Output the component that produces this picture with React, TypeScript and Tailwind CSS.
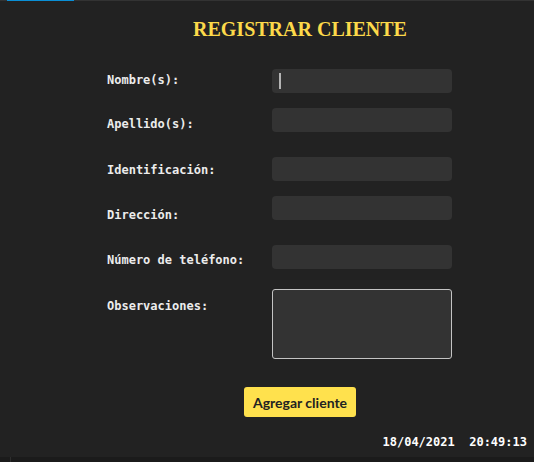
import React from "react";

const mono = { fontFamily: '"DejaVu Sans Mono", "Liberation Mono", monospace' };

function Field({ tall, caret, className }: { tall?: boolean; caret?: boolean; className?: string }) {
  if (tall) {
    return (
      <textarea
        className={`block w-[180px] h-[70px] resize-none rounded-[3px] border border-[#c4c4c4] bg-[#333333] outline-none ${className ?? ""}`}
      />
    );
  }
  return (
    <div className={`relative w-[180px] h-[24px] ${className ?? ""}`}>
      <input className="block w-full h-full rounded-[4px] bg-[#333333] outline-none caret-transparent px-2 text-white" />
      {caret && <span className="absolute left-[7px] top-[4px] w-[2px] h-[16px] bg-[#b4b4b4]" />}
    </div>
  );
}

export default function App() {
  const labels: { text: string; mt: string }[] = [
    { text: "Nombre(s):", mt: "mt-[3px]" },
    { text: "Apellido(s):", mt: "mt-[28px]" },
    { text: "Identificación:", mt: "mt-[30px]" },
    { text: "Dirección:", mt: "mt-[29px]" },
    { text: "Número de teléfono:", mt: "mt-[29px]" },
    { text: "Observaciones:", mt: "mt-[30px]" },
  ];
  return (
    <div className="w-[534px] h-[462px] bg-[#222222] flex flex-col overflow-hidden">
      <div className="h-px bg-[#333333] flex">
        <div className="ml-[7px] w-[67px] h-px bg-[#0a8fd6]" />
      </div>
      <div className="pl-[66px] flex justify-center mt-[16px]">
        <h1
          className="text-[20px] leading-[24px] font-bold text-[#fcd94a]"
          style={{ fontFamily: '"Liberation Serif", "Times New Roman", serif' }}
        >
          REGISTRAR CLIENTE
        </h1>
      </div>
      <div className="flex mt-[28px] ml-[107px]">
        <div className="flex flex-col w-[165px]" style={mono}>
          {labels.map((l) => (
            <span key={l.text} className={`${l.mt} text-[12px] leading-[16px] font-bold text-[#ececec] whitespace-pre`}>
              {l.text}
            </span>
          ))}
        </div>
        <div className="flex flex-col">
          <Field caret />
          <Field className="mt-[15px]" />
          <Field className="mt-[25px]" />
          <Field className="mt-[15px]" />
          <Field className="mt-[25px]" />
          <Field tall className="mt-[20px]" />
        </div>
      </div>
      <div className="pl-[66px] flex justify-center mt-[28px]">
        <button
          className="h-[30px] w-[112px] rounded-[3px] bg-[#ffe14d] text-[#222222] text-[14px] font-bold"
          style={{ fontFamily: 'Lato, "Noto Sans", sans-serif' }}
        >
          Agregar cliente
        </button>
      </div>
      <div className="flex justify-end pr-[7px] mt-[17px]" style={mono}>
        <span className="text-[12px] leading-[16px] font-bold text-white whitespace-pre">18/04/2021  20:49:13</span>
      </div>
      <div className="mt-[7px] h-[5px] bg-[#1b1b1b] flex">
        <div className="ml-[10px] w-px h-full bg-[#2e2e2e]" />
      </div>
    </div>
  );
}
